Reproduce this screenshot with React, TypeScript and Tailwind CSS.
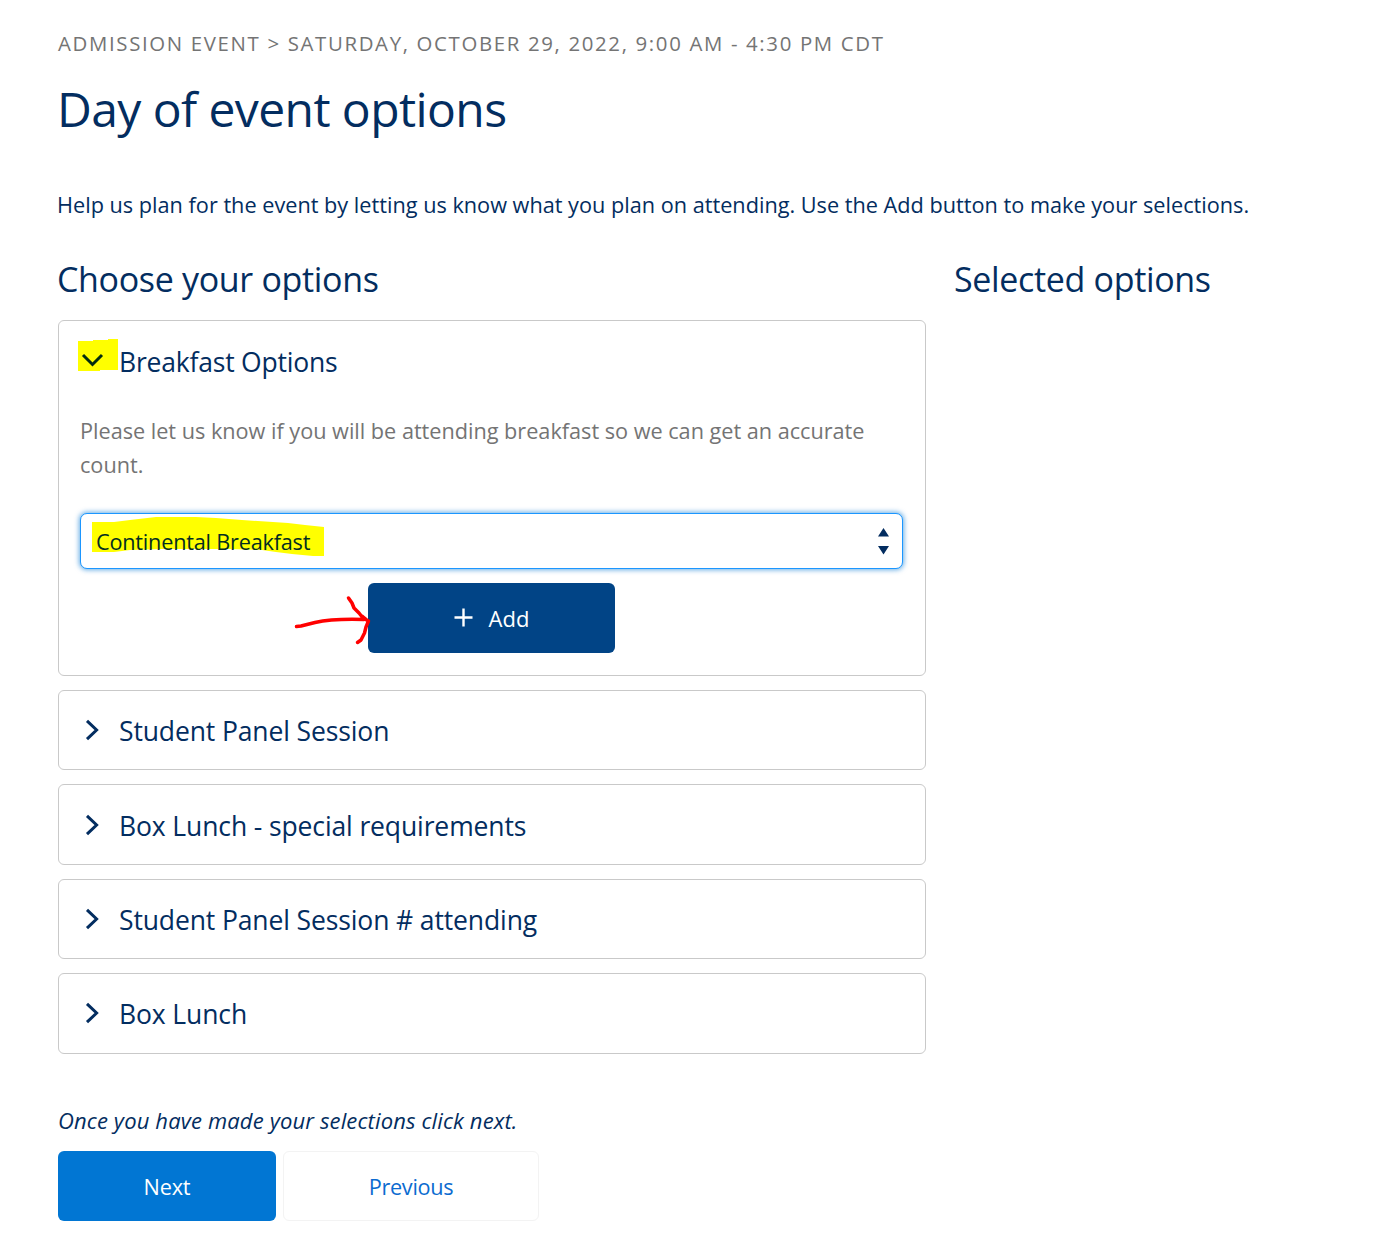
function ChevronRight() {
  return (
    <svg className="h-6 w-6" viewBox="0 0 24 24" fill="none" stroke="#032d60" strokeWidth="3">
      <path d="M8 2.8 17.6 12 8 21.2" />
    </svg>
  );
}

function ClosedOption({ label }: { label: string }) {
  return (
    <button className="flex h-[80.4px] w-full items-center rounded-[6px] border border-[#c9c9c9] bg-white pl-5 text-left">
      <ChevronRight />
      <span className="relative top-px ml-4 text-[26.5px] leading-[38px] tracking-[-0.12px]">{label}</span>
    </button>
  );
}

export default function App() {
  return (
    <main className="h-[1247px] w-full overflow-hidden bg-white pt-7 pl-[58px] font-['Open_Sans','Noto_Sans',sans-serif] text-[21.7px] leading-[34px] text-[#032d60]">
      <p className="text-[20.4px] leading-[30px] tracking-[1.65px] whitespace-nowrap text-[#747474]">
        ADMISSION EVENT &gt; SATURDAY, OCTOBER 29, 2022, 9:00 AM - 4:30 PM CDT
      </p>
      <h1 className="-ml-px mt-[18px] text-[48px] leading-[66px] tracking-[-0.58px]">Day of event options</h1>
      <p className="-ml-px mt-[46px] whitespace-nowrap">
        Help us plan for the event by letting us know what you plan on attending. Use the Add button to make your selections.
      </p>

      <div className="mt-[33px] flex gap-7">
        <section className="w-[868px]">
          <h2 className="-ml-px text-[34px] leading-[48px] tracking-[-0.33px]">Choose your options</h2>

          <div className="mt-[17px] flex flex-col gap-[14px]">
            <div className="h-[356px] rounded-[6px] border border-[#c9c9c9] pt-[22px] pr-[22px] pl-[21px]">
              <div className="relative flex items-center">
                <svg className="absolute -top-1 -left-[2px] h-[33px] w-10" viewBox="0 0 40 33">
                  <path d="M0 2H15V1H30V0H40V31H22V32H0Z" fill="#ff0" />
                </svg>
                <svg className="relative -top-[3px] h-6 w-6" viewBox="0 0 24 24" fill="none" stroke="#032d10" strokeWidth="3">
                  <path d="M3 8 12.5 17.5 22 8" />
                </svg>
                <span className="ml-[15px] text-[26.5px] leading-[38px] tracking-[-0.2px]">Breakfast Options</span>
              </div>

              <p className="mt-[33px] tracking-[-0.02px] text-[#747474]">
                Please let us know if you will be attending breakfast so we can get an accurate
                <br />
                count.
              </p>

              <button className="relative mt-[31px] flex h-14 w-[823px] items-center justify-between rounded-[7px] border border-[#1b96ff] bg-white pr-3 pl-[15px] shadow-[0_0_5px_1px_#0176d399]">
                <svg className="absolute top-[2px] left-[11px] h-[41px] w-[232px]" viewBox="0 0 232 41">
                  <path d="M0 6H22L38 4 64 1H104L124 2 150 4 196 7 213 9 232 11V40H221L200 38 184 36 170 34 136 33H70L38 34 22 36H0Z" fill="#ff0" />
                </svg>
                <span className="relative top-px tracking-[-0.22px] text-[#032d20]">Continental Breakfast</span>
                <svg className="h-7 w-3" viewBox="0 0 12 28" fill="#032d60">
                  <path d="M5.500 1 11 9.500H0ZM0 19H11L5.500 27.500Z" />
                </svg>
              </button>

              <div className="relative mx-auto mt-[14px] w-[247px]">
                <button className="flex h-[70px] w-full items-center justify-center rounded-[6px] bg-[#014486] text-white">
                  <svg className="relative -top-px mr-4 h-[19px] w-[19px]" viewBox="0 0 19 19" stroke="currentColor" strokeWidth="2.4">
                    <path d="M9.5 .5V18.5M.5 9.5H18.5" />
                  </svg>
                  <span className="text-[22px]">Add</span>
                </button>
                <svg className="absolute top-3 -left-[75px] h-[50px] w-20" viewBox="0 0 80 50" fill="none" stroke="#f00" strokeWidth="3.5" strokeLinecap="round" strokeLinejoin="round">
                  <path d="M3.500 31.500 8 31 22 27.500Q40 23.500 71 24.500M55.500 3 59 8 61 13 66 18 70 23 75.500 26 73 32 71.500 38 68 45 64.500 47.500M69 21 75 26" />
                </svg>
              </div>
            </div>

            <ClosedOption label="Student Panel Session" />
            <ClosedOption label="Box Lunch - special requirements" />
            <ClosedOption label="Student Panel Session # attending" />
            <ClosedOption label="Box Lunch" />
          </div>
        </section>

        <section>
          <h2 className="text-[34px] leading-[48px] tracking-[-0.33px]">Selected options</h2>
        </section>
      </div>

      <p className="mt-[49.4px] text-[22px] tracking-[0.14px] italic">Once you have made your selections click next.</p>
      <div className="mt-[14px] flex gap-[7px]">
        <button className="h-[70px] w-[218px] rounded-[6px] bg-[#0176d3] pt-0.5 tracking-[-0.2px] text-white">Next</button>
        <button className="h-[70px] w-64 rounded-[6px] border border-[#f3f3f3] bg-white pt-0.5 tracking-[-0.3px] text-[#0b6bd0]">Previous</button>
      </div>
    </main>
  );
}
